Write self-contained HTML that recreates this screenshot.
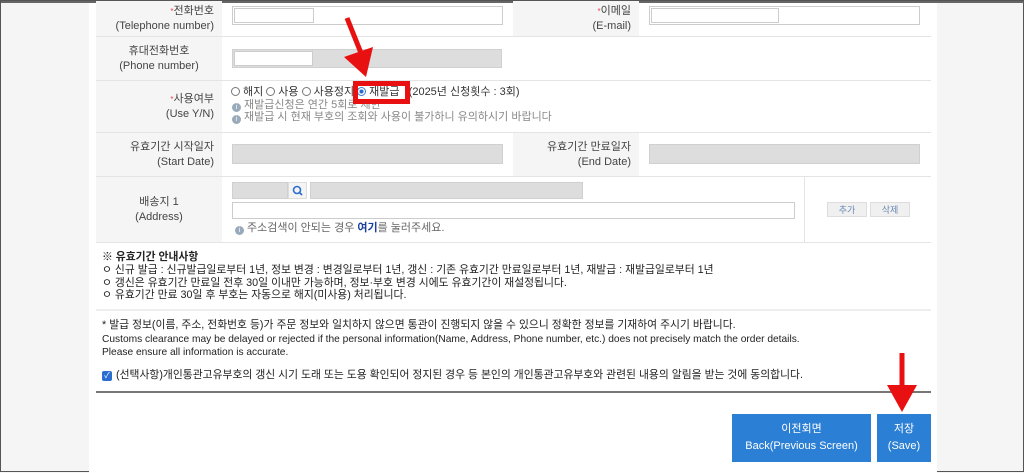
<!DOCTYPE html>
<html><head><meta charset="utf-8"><style>
*{margin:0;padding:0;box-sizing:border-box}
body{width:1024px;height:472px;position:relative;overflow:hidden;background:#f5f5f5;font-family:"Liberation Sans","Noto Sans CJK KR",sans-serif;color:#333;font-size:10px;border:1px solid #555}
.a{position:absolute}
.page{left:88px;top:0;width:848px;height:472px;background:#fff}
.lab{background:#f5f5f5;text-align:right;padding-right:8px;color:#444;line-height:15px;font-size:11px;display:flex;flex-direction:column;justify-content:center;align-items:flex-end}
.lab.c{align-items:center;text-align:center;padding:0}
.hl{height:1px;background:#e4e4e4}
.inp{border:1px solid #ccc;background:#fff}
.gr{background:#ddd;border:1px solid #d0d0d0}
.req{color:#e44;font-size:8px}
.t{white-space:nowrap;line-height:13px}
.i{display:inline-block;width:9px;height:9px;border-radius:50%;background:#9ab;color:#fff;font-size:7px;line-height:9px;text-align:center;vertical-align:-1px;margin-right:3px}
.rb{display:inline-block;width:9px;height:9px;border:1px solid #777;border-radius:50%;vertical-align:-1px;margin-right:3px}
.btn{background:#2b7fd4;color:#fff;text-align:center;font-size:11px;line-height:17px;display:flex;flex-direction:column;justify-content:center}
.sb{background:#f0f0f0;border:1px solid #ddd;color:#6a8ab5;font-size:9px;text-align:center;line-height:14px}
</style></head><body>
<div class="a page"></div>
<div class="a" style="left:0;top:0;width:1024px;height:2px;background:#666"></div>
<div class="a lab" style="left:95px;top:0;width:126px;height:35px"><div><span class="req">*</span>전화번호</div><div>(Telephone number)</div></div>
<div class="a lab" style="left:512px;top:0;width:126px;height:35px"><div><span class="req">*</span>이메일</div><div>(E-mail)</div></div>
<div class="a lab c" style="left:95px;top:36px;width:126px;height:43px"><div>휴대전화번호</div><div>(Phone number)</div></div>
<div class="a lab" style="left:95px;top:80px;width:126px;height:51px"><div><span class="req">*</span>사용여부</div><div>(Use Y/N)</div></div>
<div class="a lab" style="left:95px;top:132px;width:126px;height:43px"><div>유효기간 시작일자</div><div>(Start Date)</div></div>
<div class="a lab" style="left:512px;top:132px;width:126px;height:43px"><div>유효기간 만료일자</div><div>(End Date)</div></div>
<div class="a lab c" style="left:95px;top:176px;width:126px;height:65px"><div>배송지 1</div><div>(Address)</div></div>
<div class="a" style="left:803px;top:176px;width:1px;height:65px;background:#e4e4e4"></div>
<div class="a hl" style="left:95px;top:35px;width:835px"></div>
<div class="a hl" style="left:95px;top:79px;width:835px"></div>
<div class="a hl" style="left:95px;top:131px;width:835px"></div>
<div class="a hl" style="left:95px;top:175px;width:835px"></div>
<div class="a hl" style="left:95px;top:241px;width:835px"></div>
<div class="a inp" style="left:231px;top:5px;width:271px;height:19px"></div>
<div class="a inp" style="left:233px;top:7px;width:80px;height:15px"></div>
<div class="a inp" style="left:648px;top:5px;width:271px;height:19px"></div>
<div class="a inp" style="left:650px;top:7px;width:128px;height:15px"></div>
<div class="a gr" style="left:231px;top:48px;width:270px;height:19px"></div>
<div class="a inp" style="left:233px;top:50px;width:79px;height:15px"></div>
<div class="a t" style="left:230px;top:85px;font-size:11px;color:#333"><span class="rb"></span>해지 <span class="rb"></span>사용 <span class="rb"></span>사용정지 <span class="rb" style="border-color:#3a7bd5;background:radial-gradient(#2a6fd0 40%,#fff 45%)"></span>재발급 &nbsp;&nbsp;(2025년 신청횟수 : 3회)</div>
<div class="a t" style="left:231px;top:98px;color:#888;font-size:11px"><span class="i">i</span>재발급신청은 연간 5회로 제한</div>
<div class="a t" style="left:231px;top:110px;color:#888;font-size:11px"><span class="i">i</span>재발급 시 현재 부호의 조회와 사용이 불가하니 유의하시기 바랍니다</div>
<div class="a" style="left:352px;top:80px;width:57px;height:23px;border:5px solid #e81010"></div>
<div class="a gr" style="left:231px;top:143px;width:271px;height:20px"></div>
<div class="a gr" style="left:648px;top:143px;width:271px;height:20px"></div>
<div class="a gr" style="left:231px;top:181px;width:56px;height:17px"></div>
<div class="a" style="left:287px;top:181px;width:19px;height:17px;background:#f4f4f4;border:1px solid #ddd"><svg width="17" height="15"><circle cx="8" cy="7" r="3.5" fill="none" stroke="#2a6fd0" stroke-width="1.6"/><line x1="10.5" y1="9.5" x2="13" y2="12" stroke="#2a6fd0" stroke-width="1.8"/></svg></div>
<div class="a gr" style="left:309px;top:181px;width:273px;height:17px"></div>
<div class="a inp" style="left:231px;top:201px;width:563px;height:17px"></div>
<div class="a t" style="left:234px;top:221px;color:#666;font-size:11px"><span class="i">i</span>주소검색이 안되는 경우 <b style="color:#1a3fa0">여기</b>를 눌러주세요.</div>
<div class="a sb" style="left:826px;top:201px;width:40px;height:15px">추가</div>
<div class="a sb" style="left:869px;top:201px;width:40px;height:15px">삭제</div>
<div class="a t" style="left:101px;top:250px;font-size:10.8px;color:#222;line-height:12.8px">
<b>※ 유효기간 안내사항</b><br>
ㅇ 신규 발급 : 신규발급일로부터 1년, 정보 변경 : 변경일로부터 1년, 갱신 : 기존 유효기간 만료일로부터 1년, 재발급 : 재발급일로부터 1년<br>
ㅇ 갱신은 유효기간 만료일 전후 30일 이내만 가능하며, 정보·부호 변경 시에도 유효기간이 재설정됩니다.<br>
ㅇ 유효기간 만료 30일 후 부호는 자동으로 해지(미사용) 처리됩니다.</div>
<div class="a" style="left:95px;top:308px;width:835px;height:2px;background:#eee"></div>
<div class="a t" style="left:101px;top:318px;font-size:10.8px;color:#222;line-height:13.5px">
* 발급 정보(이름, 주소, 전화번호 등)가 주문 정보와 일치하지 않으면 통관이 진행되지 않을 수 있으니 정확한 정보를 기재하여 주시기 바랍니다.<br>
<span style="font-size:10.2px">Customs clearance may be delayed or rejected if the personal information(Name, Address, Phone number, etc.) does not precisely match the order details.</span><br>
<span style="font-size:10.2px">Please ensure all information is accurate.</span></div>
<div class="a" style="left:101px;top:370px;width:10px;height:10px;background:#2a6fd0;border-radius:2px;color:#fff;font-size:8px;line-height:10px;text-align:center">✓</div>
<div class="a t" style="left:115px;top:368px;font-size:10.8px;color:#222">(선택사항)개인통관고유부호의 갱신 시기 도래 또는 도용 확인되어 정지된 경우 등 본인의 개인통관고유부호와 관련된 내용의 알림을 받는 것에 동의합니다.</div>
<div class="a" style="left:95px;top:390px;width:835px;height:2px;background:#777"></div>
<div class="a btn" style="left:731px;top:413px;width:139px;height:48px"><div>이전회면</div><div>Back(Previous Screen)</div></div>
<div class="a btn" style="left:876px;top:413px;width:54px;height:48px"><div>저장</div><div>(Save)</div></div>
<svg class="a" style="left:0;top:0" width="1024" height="472">
<line x1="346" y1="17" x2="360" y2="52" stroke="#e81010" stroke-width="5"/>
<polygon points="343,56 372,46 365,76" fill="#e81010"/>
<line x1="901" y1="352" x2="901" y2="388" stroke="#e81010" stroke-width="5"/>
<polygon points="886,384 916,384 901,411" fill="#e81010"/>
</svg>
</body></html>
